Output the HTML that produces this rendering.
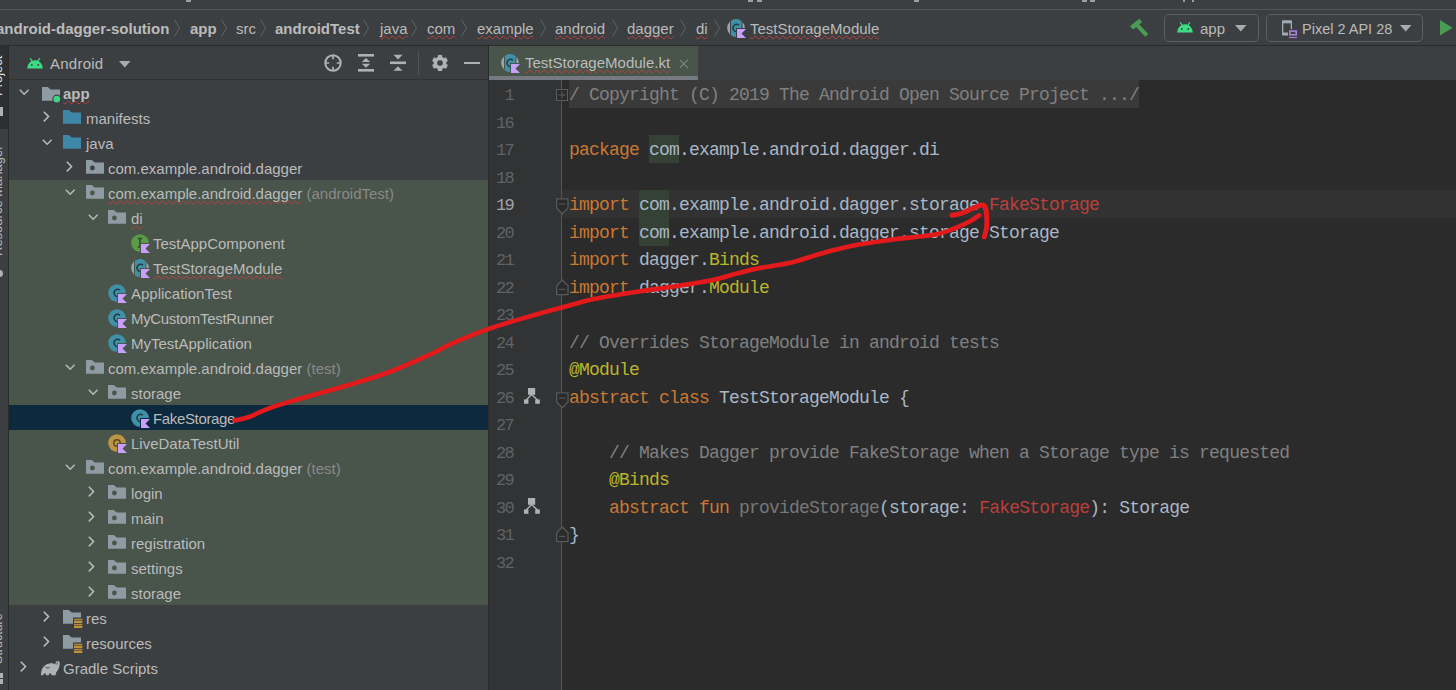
<!DOCTYPE html><html><head><meta charset="utf-8"><style>
*{box-sizing:border-box}
html,body{margin:0;padding:0}
body{width:1456px;height:690px;overflow:hidden;position:relative;background:#3C3F41;font-family:"Liberation Sans", sans-serif;color:#BBBBBB}
.a{position:absolute}
.t{position:absolute;white-space:pre;font-size:15px;line-height:20px}
.b{font-weight:bold}
.sq{text-decoration:underline wavy #BC3F3C;text-decoration-thickness:1px;text-underline-offset:0.5px;text-decoration-skip-ink:none}
.code{position:absolute;white-space:pre;font-family:"Liberation Mono", monospace;font-size:18px;letter-spacing:-0.8px;line-height:27.5px;color:#A9B7C6;left:569px}
.ln{position:absolute;white-space:pre;font-family:"Liberation Mono", monospace;font-size:17px;letter-spacing:-1.7px;line-height:27.5px;color:#606366;width:40px;text-align:right;left:473px}
.kw{color:#CC7832}.an{color:#BBB529}.cm{color:#808080}.er{color:#BC3F3C}.gr{color:#787878}
svg{position:absolute;overflow:visible}
</style></head><body>

<div class="a" style="left:0;top:9px;width:1456px;height:1px;background:#515658"></div>
<div class="a" style="left:0;top:45px;width:1456px;height:1px;background:#2B2B2B"></div>
<div class="t b" style="left:-4px;top:19px">android-dagger-solution</div>
<div class="t b" style="left:190px;top:19px">app</div>
<div class="t" style="left:236px;top:19px">src</div>
<div class="t b" style="left:275px;top:19px">androidTest</div>
<div class="t sq" style="left:380px;top:19px">java</div>
<div class="t sq" style="left:427px;top:19px">com</div>
<div class="t sq" style="left:477px;top:19px">example</div>
<div class="t sq" style="left:555px;top:19px">android</div>
<div class="t sq" style="left:627px;top:19px">dagger</div>
<div class="t sq" style="left:696px;top:19px">di</div>
<div class="t sq" style="left:750px;top:19px">TestStorageModule</div>
<svg style="left:174px;top:19px" width="6" height="18"><path d="M0.5 0.5 L5.5 9 L0.5 17.5" stroke="#5E6264" stroke-width="1" fill="none"/></svg>
<svg style="left:221px;top:19px" width="6" height="18"><path d="M0.5 0.5 L5.5 9 L0.5 17.5" stroke="#5E6264" stroke-width="1" fill="none"/></svg>
<svg style="left:260px;top:19px" width="6" height="18"><path d="M0.5 0.5 L5.5 9 L0.5 17.5" stroke="#5E6264" stroke-width="1" fill="none"/></svg>
<svg style="left:363px;top:19px" width="6" height="18"><path d="M0.5 0.5 L5.5 9 L0.5 17.5" stroke="#5E6264" stroke-width="1" fill="none"/></svg>
<svg style="left:411px;top:19px" width="6" height="18"><path d="M0.5 0.5 L5.5 9 L0.5 17.5" stroke="#5E6264" stroke-width="1" fill="none"/></svg>
<svg style="left:461px;top:19px" width="6" height="18"><path d="M0.5 0.5 L5.5 9 L0.5 17.5" stroke="#5E6264" stroke-width="1" fill="none"/></svg>
<svg style="left:540px;top:19px" width="6" height="18"><path d="M0.5 0.5 L5.5 9 L0.5 17.5" stroke="#5E6264" stroke-width="1" fill="none"/></svg>
<svg style="left:612px;top:19px" width="6" height="18"><path d="M0.5 0.5 L5.5 9 L0.5 17.5" stroke="#5E6264" stroke-width="1" fill="none"/></svg>
<svg style="left:680px;top:19px" width="6" height="18"><path d="M0.5 0.5 L5.5 9 L0.5 17.5" stroke="#5E6264" stroke-width="1" fill="none"/></svg>
<svg style="left:714px;top:19px" width="6" height="18"><path d="M0.5 0.5 L5.5 9 L0.5 17.5" stroke="#5E6264" stroke-width="1" fill="none"/></svg>
<div class="a" style="left:0;top:46px;width:8px;height:644px;background:#3C3F41"></div>
<div class="a" style="left:0;top:46px;width:8px;height:83px;background:#2D2F30"></div>
<div class="a" style="left:8px;top:46px;width:1px;height:644px;background:#2B2B2B"></div>
<div class="a" style="left:186px;top:0;width:5px;height:1.5px;background:#9C9EA0"></div>
<div class="a" style="left:748px;top:0;width:5px;height:1.5px;background:#9C9EA0"></div>
<div class="a" style="left:757px;top:0;width:5px;height:1.5px;background:#9C9EA0"></div>
<div class="a" style="left:914px;top:0;width:5px;height:1.5px;background:#9C9EA0"></div>
<div class="a" style="left:1082px;top:0;width:5px;height:1.5px;background:#9C9EA0"></div>
<div class="a" style="left:1090px;top:0;width:5px;height:1.5px;background:#9C9EA0"></div>
<div class="a" style="left:1183px;top:0;width:2px;height:1.5px;background:#9C9EA0"></div>
<div class="a" style="left:1192px;top:0;width:2px;height:1.5px;background:#9C9EA0"></div>
<div class="a" style="left:9px;top:79px;width:479px;height:1px;background:#323232"></div>
<div class="t" style="left:50px;top:54px;letter-spacing:0.25px">Android</div>
<svg style="left:27px;top:58px" width="16" height="11" viewBox="0 0 16 11"><path d="M3.2 0.3 L5.3 3.6 M12.8 0.3 L10.7 3.6" stroke="#3DDC84" stroke-width="1.2"/><path d="M0.2 10.5 C0.6 5.5 4 2.3 8 2.3 C12 2.3 15.4 5.5 15.8 10.5 Z" fill="#3DDC84"/><circle cx="4.8" cy="7" r="0.9" fill="#3C3F41"/><circle cx="11.2" cy="7" r="0.9" fill="#3C3F41"/></svg>
<svg style="left:119px;top:61px" width="12" height="7"><path d="M0 0 H11.5 L5.75 6.5 Z" fill="#A9ABAD"/></svg>
<svg style="left:323px;top:53px" width="20" height="20"><circle cx="10" cy="10" r="7.7" stroke="#AFB1B3" stroke-width="2" fill="none"/><path d="M10 2 V6.2 M10 13.8 V18 M2 10 H6.2 M13.8 10 H18" stroke="#AFB1B3" stroke-width="1.7"/></svg>
<svg style="left:358px;top:53px" width="16" height="20"><rect x="0" y="1" width="16" height="2.6" fill="#AFB1B3"/><rect x="0" y="16" width="16" height="2.6" fill="#AFB1B3"/><path d="M3.8 9 L8 5 L12.2 9 Z M3.8 10.8 L8 14.8 L12.2 10.8 Z" fill="#AFB1B3"/></svg>
<svg style="left:390px;top:53px" width="16" height="20"><rect x="0" y="8.5" width="16" height="2.6" fill="#AFB1B3"/><path d="M3.5 1.8 H12.5 L8 6.6 Z M3.5 17.8 H12.5 L8 13.2 Z" fill="#AFB1B3"/></svg>
<div class="a" style="left:418px;top:51px;width:1px;height:24px;background:#515456"></div>
<svg style="left:430px;top:53px" width="20" height="20"><rect x="7.8" y="2" width="4.4" height="8" rx="0.6" transform="rotate(0 10 10)" fill="#AFB1B3"/><rect x="7.8" y="2" width="4.4" height="8" rx="0.6" transform="rotate(60 10 10)" fill="#AFB1B3"/><rect x="7.8" y="2" width="4.4" height="8" rx="0.6" transform="rotate(120 10 10)" fill="#AFB1B3"/><rect x="7.8" y="2" width="4.4" height="8" rx="0.6" transform="rotate(180 10 10)" fill="#AFB1B3"/><rect x="7.8" y="2" width="4.4" height="8" rx="0.6" transform="rotate(240 10 10)" fill="#AFB1B3"/><rect x="7.8" y="2" width="4.4" height="8" rx="0.6" transform="rotate(300 10 10)" fill="#AFB1B3"/><circle cx="10" cy="10" r="6.4" fill="#AFB1B3"/><circle cx="10" cy="10" r="2.8" fill="#3C3F41"/></svg>
<div class="a" style="left:464px;top:61.5px;width:16px;height:2.7px;background:#AFB1B3"></div>
<svg style="left:1128px;top:17px" width="24" height="22"><path d="M2 9.3 L11.2 1.8 L14.2 4.9 L5.2 12.4 Z" fill="#499C54"/><path d="M8.6 7.6 L18.8 18.4" stroke="#499C54" stroke-width="4.2"/></svg>
<div class="a" style="left:1163.5px;top:14px;width:95px;height:27.5px;border:1.4px solid #5E6060;border-radius:5px"></div>
<svg style="left:1177px;top:22px" width="16" height="11" viewBox="0 0 16 11"><path d="M3.2 0.3 L5.3 3.6 M12.8 0.3 L10.7 3.6" stroke="#3DDC84" stroke-width="1.2"/><path d="M0.2 10.5 C0.6 5.5 4 2.3 8 2.3 C12 2.3 15.4 5.5 15.8 10.5 Z" fill="#3DDC84"/><circle cx="4.8" cy="7" r="0.9" fill="#3C3F41"/><circle cx="11.2" cy="7" r="0.9" fill="#3C3F41"/></svg>
<div class="t" style="left:1200px;top:19px">app</div>
<svg style="left:1235px;top:25px" width="12" height="7"><path d="M0 0 H11.5 L5.75 6.6 Z" fill="#A9ABAD"/></svg>
<div class="a" style="left:1266px;top:14px;width:157px;height:27.5px;border:1.4px solid #5E6060;border-radius:5px"></div>
<svg style="left:1282px;top:20px" width="17" height="19"><rect x="0" y="0.2" width="10" height="15.4" rx="0.8" fill="#9FABB2"/><rect x="1.3" y="3.3" width="7.4" height="9.2" fill="#3C3F41"/><rect x="6" y="9.2" width="11" height="9.8" fill="#3C3F41"/><rect x="7" y="10.2" width="8.1" height="5.4" fill="#A27DD6"/><rect x="8.7" y="11.9" width="4.7" height="2" fill="#3C3F41"/><rect x="7" y="16.9" width="8.1" height="1.2" fill="#A27DD6"/></svg>
<div class="t" style="left:1302px;top:19px;font-size:14.5px">Pixel 2 API 28</div>
<svg style="left:1400px;top:25px" width="12" height="7"><path d="M0 0 H11.5 L5.75 6.6 Z" fill="#A9ABAD"/></svg>
<svg style="left:1440px;top:20px" width="16" height="16"><path d="M0 0 L12.5 7.8 L0 15.6 Z" fill="#499C54"/></svg>
<div class="a" style="left:9px;top:180px;width:479px;height:425px;background:#49544A"></div>
<div class="a" style="left:9px;top:405px;width:479px;height:25px;background:#0D293E"></div>
<svg style="left:18.5px;top:88.5px" width="12" height="8"><path d="M0.8 0.8 L5.2 5.2 L9.6 0.8" stroke="#B8BABC" stroke-width="1.5" fill="none"/></svg>
<svg style="left:41.8px;top:86.5px" width="20" height="18"><path d="M0 0 H5.8 L8.7 2.5 H18 V13.7 H0 Z" fill="#8E9BA3"/><circle cx="14.8" cy="12.1" r="4.5" fill="#3C3F41"/><circle cx="14.8" cy="12.1" r="3.4" fill="#3DD384"/></svg>
<div class="t" style="left:63px;top:84px;letter-spacing:0"><span class="b sq">app</span><span style="color:#8A8A8A"></span></div>
<svg style="left:43px;top:111.2px" width="8" height="12"><path d="M0.8 0.8 L5.6 5.6 L0.8 10.4" stroke="#B8BABC" stroke-width="1.5" fill="none"/></svg>
<svg style="left:63px;top:110.4px" width="19" height="15"><path d="M0 0 H5.8 L8.7 2.5 H18 V13.7 H0 Z" fill="#3F87A6"/></svg>
<div class="t" style="left:86px;top:109px;letter-spacing:0"><span class="">manifests</span><span style="color:#8A8A8A"></span></div>
<svg style="left:41.5px;top:138.5px" width="12" height="8"><path d="M0.8 0.8 L5.2 5.2 L9.6 0.8" stroke="#B8BABC" stroke-width="1.5" fill="none"/></svg>
<svg style="left:63px;top:135.4px" width="19" height="15"><path d="M0 0 H5.8 L8.7 2.5 H18 V13.7 H0 Z" fill="#3F87A6"/></svg>
<div class="t" style="left:86px;top:134px;letter-spacing:0"><span class="">java</span><span style="color:#8A8A8A"></span></div>
<svg style="left:66px;top:161.2px" width="8" height="12"><path d="M0.8 0.8 L5.6 5.6 L0.8 10.4" stroke="#B8BABC" stroke-width="1.5" fill="none"/></svg>
<svg style="left:86px;top:160.4px" width="19" height="15"><path d="M0 0 H5.8 L8.7 2.5 H18 V13.7 H0 Z" fill="#8E9BA3"/><circle cx="6.4" cy="8" r="2.4" fill="#3C3F41"/></svg>
<div class="t" style="left:108px;top:159px;letter-spacing:0"><span class="">com.example.android.dagger</span><span style="color:#8A8A8A"></span></div>
<svg style="left:64.5px;top:188.5px" width="12" height="8"><path d="M0.8 0.8 L5.2 5.2 L9.6 0.8" stroke="#B8BABC" stroke-width="1.5" fill="none"/></svg>
<svg style="left:86px;top:185.4px" width="19" height="15"><path d="M0 0 H5.8 L8.7 2.5 H18 V13.7 H0 Z" fill="#8E9BA3"/><circle cx="6.4" cy="8" r="2.4" fill="#49544A"/></svg>
<div class="t" style="left:108px;top:184px;letter-spacing:0"><span class="sq">com.example.android.dagger</span><span style="color:#8A8A8A"> (androidTest)</span></div>
<svg style="left:87.5px;top:213.5px" width="12" height="8"><path d="M0.8 0.8 L5.2 5.2 L9.6 0.8" stroke="#B8BABC" stroke-width="1.5" fill="none"/></svg>
<svg style="left:108px;top:210.4px" width="19" height="15"><path d="M0 0 H5.8 L8.7 2.5 H18 V13.7 H0 Z" fill="#8E9BA3"/><circle cx="6.4" cy="8" r="2.4" fill="#49544A"/></svg>
<div class="t" style="left:131px;top:209px;letter-spacing:0"><span class="sq">di</span><span style="color:#8A8A8A"></span></div>
<svg style="left:131px;top:234px" width="20" height="20"><circle cx="9" cy="9" r="8.8" fill="#5B9A47"/><path d="M6.8 4.6 H11.2 M9 4.6 V13 M6.8 13 H11.2" stroke="#2E4A28" stroke-width="1.5" fill="none"/><rect x="9" y="9" width="11" height="11" fill="#49544A"/><path d="M10 10 H19 L14.5 14.5 L19 19 H10 Z" fill="#C7A0FB"/></svg>
<div class="t" style="left:153px;top:234px;letter-spacing:0"><span class="">TestAppComponent</span><span style="color:#8A8A8A"></span></div>
<svg style="left:131px;top:259px" width="20" height="20"><circle cx="9" cy="9" r="8.8" fill="#9AA5AC"/><path d="M3 2.56 A8.8 8.8 0 0 1 15.5 3.07 V14.93 A8.8 8.8 0 0 1 3 15.44 Z" fill="#49544A"/><path d="M4 1.76 A8.8 8.8 0 0 1 14.5 2.13 V15.87 A8.8 8.8 0 0 1 4 16.24 Z" fill="#4090A8"/><path d="M12 6.2 A3.6 3.6 0 1 0 11.5 12" stroke="#223A44" stroke-width="1.4" fill="none"/><rect x="9" y="9" width="11" height="11" fill="#49544A"/><path d="M10 10 H19 L14.5 14.5 L19 19 H10 Z" fill="#C7A0FB"/></svg>
<div class="t" style="left:153px;top:259px;letter-spacing:0"><span class="sq">TestStorageModule</span><span style="color:#8A8A8A"></span></div>
<svg style="left:108px;top:284px" width="20" height="20"><circle cx="9" cy="9" r="8.8" fill="#4090A8"/><path d="M12 6.2 A3.6 3.6 0 1 0 11.5 12" stroke="#223A44" stroke-width="1.4" fill="none"/><rect x="9" y="9" width="11" height="11" fill="#49544A"/><path d="M10 10 H19 L14.5 14.5 L19 19 H10 Z" fill="#C7A0FB"/></svg>
<div class="t" style="left:131px;top:284px;letter-spacing:0"><span class="">ApplicationTest</span><span style="color:#8A8A8A"></span></div>
<svg style="left:108px;top:309px" width="20" height="20"><circle cx="9" cy="9" r="8.8" fill="#4090A8"/><path d="M12 6.2 A3.6 3.6 0 1 0 11.5 12" stroke="#223A44" stroke-width="1.4" fill="none"/><rect x="9" y="9" width="11" height="11" fill="#49544A"/><path d="M10 10 H19 L14.5 14.5 L19 19 H10 Z" fill="#C7A0FB"/></svg>
<div class="t" style="left:131px;top:309px;letter-spacing:-0.33px"><span class="">MyCustomTestRunner</span><span style="color:#8A8A8A"></span></div>
<svg style="left:108px;top:334px" width="20" height="20"><circle cx="9" cy="9" r="8.8" fill="#4090A8"/><path d="M12 6.2 A3.6 3.6 0 1 0 11.5 12" stroke="#223A44" stroke-width="1.4" fill="none"/><rect x="9" y="9" width="11" height="11" fill="#49544A"/><path d="M10 10 H19 L14.5 14.5 L19 19 H10 Z" fill="#C7A0FB"/></svg>
<div class="t" style="left:131px;top:334px;letter-spacing:0"><span class="">MyTestApplication</span><span style="color:#8A8A8A"></span></div>
<svg style="left:64.5px;top:363.5px" width="12" height="8"><path d="M0.8 0.8 L5.2 5.2 L9.6 0.8" stroke="#B8BABC" stroke-width="1.5" fill="none"/></svg>
<svg style="left:86px;top:360.4px" width="19" height="15"><path d="M0 0 H5.8 L8.7 2.5 H18 V13.7 H0 Z" fill="#8E9BA3"/><circle cx="6.4" cy="8" r="2.4" fill="#49544A"/></svg>
<div class="t" style="left:108px;top:359px;letter-spacing:0"><span class="">com.example.android.dagger</span><span style="color:#8A8A8A"> (test)</span></div>
<svg style="left:87.5px;top:388.5px" width="12" height="8"><path d="M0.8 0.8 L5.2 5.2 L9.6 0.8" stroke="#B8BABC" stroke-width="1.5" fill="none"/></svg>
<svg style="left:108px;top:385.4px" width="19" height="15"><path d="M0 0 H5.8 L8.7 2.5 H18 V13.7 H0 Z" fill="#8E9BA3"/><circle cx="6.4" cy="8" r="2.4" fill="#49544A"/></svg>
<div class="t" style="left:131px;top:384px;letter-spacing:0"><span class="">storage</span><span style="color:#8A8A8A"></span></div>
<svg style="left:131px;top:409px" width="20" height="20"><circle cx="9" cy="9" r="8.8" fill="#4090A8"/><path d="M12 6.2 A3.6 3.6 0 1 0 11.5 12" stroke="#223A44" stroke-width="1.4" fill="none"/><rect x="9" y="9" width="11" height="11" fill="#0D293E"/><path d="M10 10 H19 L14.5 14.5 L19 19 H10 Z" fill="#C7A0FB"/></svg>
<div class="t" style="left:153px;top:409px;letter-spacing:-0.35px"><span class="">FakeStorage</span><span style="color:#8A8A8A"></span></div>
<svg style="left:108px;top:434px" width="20" height="20"><circle cx="9" cy="9" r="8.8" fill="#BB9545"/><circle cx="9" cy="9" r="3.2" stroke="#5A4420" stroke-width="1.4" fill="none"/><rect x="9" y="9" width="11" height="11" fill="#49544A"/><path d="M10 10 H19 L14.5 14.5 L19 19 H10 Z" fill="#C7A0FB"/></svg>
<div class="t" style="left:131px;top:434px;letter-spacing:0"><span class="">LiveDataTestUtil</span><span style="color:#8A8A8A"></span></div>
<svg style="left:64.5px;top:463.5px" width="12" height="8"><path d="M0.8 0.8 L5.2 5.2 L9.6 0.8" stroke="#B8BABC" stroke-width="1.5" fill="none"/></svg>
<svg style="left:86px;top:460.4px" width="19" height="15"><path d="M0 0 H5.8 L8.7 2.5 H18 V13.7 H0 Z" fill="#8E9BA3"/><circle cx="6.4" cy="8" r="2.4" fill="#49544A"/></svg>
<div class="t" style="left:108px;top:459px;letter-spacing:0"><span class="">com.example.android.dagger</span><span style="color:#8A8A8A"> (test)</span></div>
<svg style="left:88px;top:486.2px" width="8" height="12"><path d="M0.8 0.8 L5.6 5.6 L0.8 10.4" stroke="#B8BABC" stroke-width="1.5" fill="none"/></svg>
<svg style="left:108px;top:485.4px" width="19" height="15"><path d="M0 0 H5.8 L8.7 2.5 H18 V13.7 H0 Z" fill="#8E9BA3"/><circle cx="6.4" cy="8" r="2.4" fill="#49544A"/></svg>
<div class="t" style="left:131px;top:484px;letter-spacing:0"><span class="">login</span><span style="color:#8A8A8A"></span></div>
<svg style="left:88px;top:511.2px" width="8" height="12"><path d="M0.8 0.8 L5.6 5.6 L0.8 10.4" stroke="#B8BABC" stroke-width="1.5" fill="none"/></svg>
<svg style="left:108px;top:510.4px" width="19" height="15"><path d="M0 0 H5.8 L8.7 2.5 H18 V13.7 H0 Z" fill="#8E9BA3"/><circle cx="6.4" cy="8" r="2.4" fill="#49544A"/></svg>
<div class="t" style="left:131px;top:509px;letter-spacing:0"><span class="">main</span><span style="color:#8A8A8A"></span></div>
<svg style="left:88px;top:536.2px" width="8" height="12"><path d="M0.8 0.8 L5.6 5.6 L0.8 10.4" stroke="#B8BABC" stroke-width="1.5" fill="none"/></svg>
<svg style="left:108px;top:535.4px" width="19" height="15"><path d="M0 0 H5.8 L8.7 2.5 H18 V13.7 H0 Z" fill="#8E9BA3"/><circle cx="6.4" cy="8" r="2.4" fill="#49544A"/></svg>
<div class="t" style="left:131px;top:534px;letter-spacing:0"><span class="">registration</span><span style="color:#8A8A8A"></span></div>
<svg style="left:88px;top:561.2px" width="8" height="12"><path d="M0.8 0.8 L5.6 5.6 L0.8 10.4" stroke="#B8BABC" stroke-width="1.5" fill="none"/></svg>
<svg style="left:108px;top:560.4px" width="19" height="15"><path d="M0 0 H5.8 L8.7 2.5 H18 V13.7 H0 Z" fill="#8E9BA3"/><circle cx="6.4" cy="8" r="2.4" fill="#49544A"/></svg>
<div class="t" style="left:131px;top:559px;letter-spacing:0"><span class="">settings</span><span style="color:#8A8A8A"></span></div>
<svg style="left:88px;top:586.2px" width="8" height="12"><path d="M0.8 0.8 L5.6 5.6 L0.8 10.4" stroke="#B8BABC" stroke-width="1.5" fill="none"/></svg>
<svg style="left:108px;top:585.4px" width="19" height="15"><path d="M0 0 H5.8 L8.7 2.5 H18 V13.7 H0 Z" fill="#8E9BA3"/><circle cx="6.4" cy="8" r="2.4" fill="#49544A"/></svg>
<div class="t" style="left:131px;top:584px;letter-spacing:0"><span class="">storage</span><span style="color:#8A8A8A"></span></div>
<svg style="left:43px;top:611.2px" width="8" height="12"><path d="M0.8 0.8 L5.6 5.6 L0.8 10.4" stroke="#B8BABC" stroke-width="1.5" fill="none"/></svg>
<svg style="left:63px;top:610.4px" width="20" height="19"><path d="M0 0 H5.8 L8.7 2.5 H18 V13.7 H0 Z" fill="#8E9BA3"/><rect x="10" y="7.5" width="10" height="11" fill="#3C3F41"/><rect x="11" y="8.8" width="8.3" height="1.6" fill="#B88A38"/><rect x="11" y="11.2" width="8.3" height="1.6" fill="#E3A838"/><rect x="11" y="13.8" width="8.3" height="1.6" fill="#B88A38"/><rect x="11" y="16.2" width="8.3" height="1.6" fill="#E3A838"/></svg>
<div class="t" style="left:86px;top:609px;letter-spacing:0"><span class="">res</span><span style="color:#8A8A8A"></span></div>
<svg style="left:43px;top:636.2px" width="8" height="12"><path d="M0.8 0.8 L5.6 5.6 L0.8 10.4" stroke="#B8BABC" stroke-width="1.5" fill="none"/></svg>
<svg style="left:63px;top:635.4px" width="20" height="19"><path d="M0 0 H5.8 L8.7 2.5 H18 V13.7 H0 Z" fill="#8E9BA3"/><rect x="10" y="7.5" width="10" height="11" fill="#3C3F41"/><rect x="11" y="8.8" width="8.3" height="1.6" fill="#B88A38"/><rect x="11" y="11.2" width="8.3" height="1.6" fill="#E3A838"/><rect x="11" y="13.8" width="8.3" height="1.6" fill="#B88A38"/><rect x="11" y="16.2" width="8.3" height="1.6" fill="#E3A838"/></svg>
<div class="t" style="left:86px;top:634px;letter-spacing:0"><span class="">resources</span><span style="color:#8A8A8A"></span></div>
<svg style="left:20px;top:661.2px" width="8" height="12"><path d="M0.8 0.8 L5.6 5.6 L0.8 10.4" stroke="#B8BABC" stroke-width="1.5" fill="none"/></svg>
<svg style="left:40px;top:660px" width="21" height="17"><path d="M1 15.2 C0.8 9.5 3.5 4.2 9.5 3.4 C12 3.1 13.8 3.6 15.2 4.6 C15.4 2.6 16.4 1.1 17.8 1.1 C19.6 1.1 20 3.2 19.6 5.2 C19 8.5 17.6 10.8 16.3 12.3 L15.5 15.2 L11.6 15.2 L11.1 13.4 L9.2 13.4 L8.7 15.2 L6.1 15.2 L5.6 13.4 L3.7 13.4 L3.2 15.2 Z" fill="#AEB3B6"/><path d="M16.8 4.6 C16.6 3.4 17.2 2.6 17.9 2.7" stroke="#3C3F41" stroke-width="0.9" fill="none"/><path d="M5 6.5 C6 8.2 8 8.4 9.8 7.4" stroke="#3C3F41" stroke-width="0.9" fill="none"/></svg>
<div class="t" style="left:63px;top:659px;letter-spacing:0"><span class="">Gradle Scripts</span><span style="color:#8A8A8A"></span></div>
<div class="a" style="left:488px;top:46px;width:1px;height:644px;background:#2B2B2B"></div>
<div class="a" style="left:489px;top:80px;width:967px;height:610px;background:#2B2B2B"></div>
<div class="a" style="left:489px;top:80px;width:72px;height:610px;background:#313335"></div>
<div class="a" style="left:561px;top:80px;width:1px;height:610px;background:#555555"></div>
<div class="a" style="left:489px;top:46px;width:209px;height:30px;background:#49544A"></div>
<div class="a" style="left:489px;top:76px;width:209px;height:4px;background:#747A80"></div>
<div class="t sq" style="left:525px;top:53px">TestStorageModule.kt</div>
<div class="a" style="left:489px;top:190px;width:72px;height:28px;background:#313335"></div>
<div class="a" style="left:562px;top:190px;width:894px;height:28px;background:#323232"></div>
<div class="a" style="left:569px;top:80px;width:570px;height:28px;background:#3A3A3A"></div>
<div class="a" style="left:649px;top:135.00px;width:30px;height:28px;background:#344134"></div>
<div class="a" style="left:639px;top:190.00px;width:30px;height:28px;background:#344134"></div>
<div class="a" style="left:639px;top:217.50px;width:30px;height:28px;background:#344134"></div>
<div class="ln" style="top:82.00px">1</div>
<div class="code" style="top:82.00px"><span class="cm">/ Copyright (C) 2019 The Android Open Source Project .../</span></div>
<div class="ln" style="top:109.50px">16</div>
<div class="code" style="top:109.50px"></div>
<div class="ln" style="top:137.00px">17</div>
<div class="code" style="top:137.00px"><span class="kw">package</span> com.example.android.dagger.di</div>
<div class="ln" style="top:164.50px">18</div>
<div class="code" style="top:164.50px"></div>
<div class="ln" style="top:192.00px;color:#A4A3A3">19</div>
<div class="code" style="top:192.00px"><span class="kw">import</span> com.example.android.dagger.storage.<span class="er">FakeStorage</span></div>
<div class="ln" style="top:219.50px">20</div>
<div class="code" style="top:219.50px"><span class="kw">import</span> com.example.android.dagger.storage.Storage</div>
<div class="ln" style="top:247.00px">21</div>
<div class="code" style="top:247.00px"><span class="kw">import</span> dagger.<span class="an">Binds</span></div>
<div class="ln" style="top:274.50px">22</div>
<div class="code" style="top:274.50px"><span class="kw">import</span> dagger.<span class="an">Module</span></div>
<div class="ln" style="top:302.00px">23</div>
<div class="code" style="top:302.00px"></div>
<div class="ln" style="top:329.50px">24</div>
<div class="code" style="top:329.50px"><span class="cm">// Overrides StorageModule in android tests</span></div>
<div class="ln" style="top:357.00px">25</div>
<div class="code" style="top:357.00px"><span class="an">@Module</span></div>
<div class="ln" style="top:384.50px">26</div>
<div class="code" style="top:384.50px"><span class="kw">abstract class</span> TestStorageModule {</div>
<div class="ln" style="top:412.00px">27</div>
<div class="code" style="top:412.00px"></div>
<div class="ln" style="top:439.50px">28</div>
<div class="code" style="top:439.50px">    <span class="cm">// Makes Dagger provide FakeStorage when a Storage type is requested</span></div>
<div class="ln" style="top:467.00px">29</div>
<div class="code" style="top:467.00px">    <span class="an">@Binds</span></div>
<div class="ln" style="top:494.50px">30</div>
<div class="code" style="top:494.50px">    <span class="kw">abstract fun</span> <span class="gr">provideStorage</span>(storage: <span class="er">FakeStorage</span>): Storage</div>
<div class="ln" style="top:522.00px">31</div>
<div class="code" style="top:522.00px">}</div>
<div class="ln" style="top:549.50px">32</div>
<div class="code" style="top:549.50px"></div>
<svg style="left:727px;top:19px" width="20" height="20"><circle cx="9" cy="9" r="8.8" fill="#9AA5AC"/><path d="M3 2.56 A8.8 8.8 0 0 1 15.5 3.07 V14.93 A8.8 8.8 0 0 1 3 15.44 Z" fill="#3C3F41"/><path d="M4 1.76 A8.8 8.8 0 0 1 14.5 2.13 V15.87 A8.8 8.8 0 0 1 4 16.24 Z" fill="#4090A8"/><path d="M12 6.2 A3.6 3.6 0 1 0 11.5 12" stroke="#223A44" stroke-width="1.4" fill="none"/><rect x="9" y="9" width="11" height="11" fill="#3C3F41"/><path d="M10 10 H19 L14.5 14.5 L19 19 H10 Z" fill="#C7A0FB"/></svg>
<svg style="left:501px;top:54px" width="20" height="20"><circle cx="9" cy="9" r="8.8" fill="#9AA5AC"/><path d="M3 2.56 A8.8 8.8 0 0 1 15.5 3.07 V14.93 A8.8 8.8 0 0 1 3 15.44 Z" fill="#49544A"/><path d="M4 1.76 A8.8 8.8 0 0 1 14.5 2.13 V15.87 A8.8 8.8 0 0 1 4 16.24 Z" fill="#4090A8"/><path d="M12 6.2 A3.6 3.6 0 1 0 11.5 12" stroke="#223A44" stroke-width="1.4" fill="none"/><rect x="9" y="9" width="11" height="11" fill="#49544A"/><path d="M10 10 H19 L14.5 14.5 L19 19 H10 Z" fill="#C7A0FB"/></svg>
<svg style="left:678.5px;top:58.5px" width="10" height="10"><path d="M0.8 0.8 L8.8 8.8 M8.8 0.8 L0.8 8.8" stroke="#7F8382" stroke-width="1.2"/></svg>
<svg style="left:556px;top:88.5px" width="12" height="12"><rect x="0.5" y="0.5" width="11" height="11" fill="#2B2B2B" stroke="#5A5D5F" stroke-width="1"/><path d="M2.5 6 H9.5 M6 2.5 V9.5" stroke="#5A5D5F" stroke-width="1"/></svg>
<svg style="left:555.5px;top:198px" width="13" height="17"><path d="M0.65 0.8 H12 V10 L6.3 15.8 L0.65 10 Z" fill="#2B2B2B" stroke="#555759" stroke-width="1.3"/><path d="M3 6.1 H9.5" stroke="#555759" stroke-width="1.1"/></svg>
<svg style="left:555.5px;top:279px" width="13" height="17"><path d="M0.65 15.6 H12 V6.7 L6.3 1 L0.65 6.7 Z" fill="#2B2B2B" stroke="#555759" stroke-width="1.3"/><path d="M3 10.4 H9.5" stroke="#555759" stroke-width="1.1"/></svg>
<svg style="left:555.5px;top:392px" width="13" height="17"><path d="M0.65 0.8 H12 V10 L6.3 15.8 L0.65 10 Z" fill="#2B2B2B" stroke="#555759" stroke-width="1.3"/><path d="M3 6.1 H9.5" stroke="#555759" stroke-width="1.1"/></svg>
<svg style="left:555.5px;top:526px" width="13" height="17"><path d="M0.65 15.6 H12 V6.7 L6.3 1 L0.65 6.7 Z" fill="#2B2B2B" stroke="#555759" stroke-width="1.3"/><path d="M3 10.4 H9.5" stroke="#555759" stroke-width="1.1"/></svg>
<svg style="left:523px;top:388px" width="18" height="17"><rect x="5" y="0" width="7.2" height="6.8" fill="#AFB1B3"/><rect x="1" y="11.4" width="4.4" height="4.4" fill="#AFB1B3"/><rect x="12.2" y="11.4" width="4.6" height="4.4" fill="#AFB1B3"/><path d="M8.6 6.5 L3.2 12 M8.6 6.5 L14.4 12" stroke="#AFB1B3" stroke-width="1.4"/></svg>
<svg style="left:523px;top:498px" width="18" height="17"><rect x="5" y="0" width="7.2" height="6.8" fill="#AFB1B3"/><rect x="1" y="11.4" width="4.4" height="4.4" fill="#AFB1B3"/><rect x="12.2" y="11.4" width="4.6" height="4.4" fill="#AFB1B3"/><path d="M8.6 6.5 L3.2 12 M8.6 6.5 L14.4 12" stroke="#AFB1B3" stroke-width="1.4"/></svg>
<div class="a" style="left:0;top:46px;width:9px;height:644px;overflow:hidden"><div class="t" style="font-size:13px;left:-11.8px;top:50px;transform-origin:0 0;transform:rotate(-90deg);color:#DFE1E5">Project</div><div class="a" style="left:0;top:60.5px;width:3px;height:9px;background:#AFB1B3"></div><div class="t" style="font-size:13px;left:-11.8px;top:210px;transform-origin:0 0;transform:rotate(-90deg);color:#BBBBBB">Resource Manager</div><div class="a" style="left:-4px;top:224px;width:7px;height:7px;border-radius:50%;background:#AFB1B3"></div><div class="t" style="font-size:12.5px;left:-11.8px;top:618px;transform-origin:0 0;transform:rotate(-90deg);color:#BBBBBB">Structure</div><div class="a" style="left:0;top:626.5px;width:2.5px;height:5.5px;background:#AFB1B3"></div><div class="a" style="left:0;top:633px;width:2.5px;height:5px;background:#AFB1B3"></div></div>
<svg style="left:0;top:0" width="1456" height="690"><g fill="none" stroke="#E3191C" stroke-linecap="round" stroke-linejoin="round"><path d="M234.5 420.5 C236.9 419.9 243.1 419.0 248.8 417.0 C254.6 415.0 260.1 411.5 269.0 408.3 C277.9 405.1 289.7 401.8 302.5 398.0 C315.3 394.2 331.5 390.1 346.0 385.8 C360.5 381.5 375.4 377.2 389.4 372.0 C403.4 366.8 419.6 359.2 430.0 354.5 C440.4 349.8 442.1 347.8 451.9 343.5 C461.7 339.2 475.3 333.4 488.6 328.8 C501.9 324.2 519.1 319.4 531.6 315.8 C544.1 312.2 552.9 309.8 563.5 307.0 C574.1 304.2 582.6 301.4 595.4 298.8 C608.1 296.2 626.7 293.4 640.0 291.3 C653.3 289.2 663.1 288.2 675.3 286.3 C687.5 284.4 702.9 282.1 713.0 280.0 C723.1 277.9 728.1 275.8 735.7 273.8 C743.3 271.9 750.9 269.8 758.4 268.3 C765.9 266.8 774.7 265.8 781.0 264.6 C787.3 263.4 789.9 263.0 796.2 261.3 C802.5 259.6 809.8 256.7 818.8 254.2 C827.8 251.7 838.2 248.6 850.0 246.2 C861.8 243.8 878.3 241.6 889.5 240.0 C900.7 238.4 909.1 237.8 917.0 236.8 C924.9 235.9 931.2 235.4 936.7 234.3 C942.2 233.2 945.9 231.6 949.9 230.2 C953.9 228.8 957.2 227.3 960.9 225.6 C964.6 223.9 968.9 221.9 971.9 220.2 C974.9 218.5 977.8 216.1 979.0 215.3" stroke-width="4.6"/><path d="M952.1 215.3 C953.6 215.0 957.6 214.6 960.9 213.5 C964.2 212.4 968.5 210.1 971.9 208.7 C975.3 207.3 979.3 205.3 981.5 205.0 C983.7 204.7 984.4 205.0 985.3 207.0 C986.2 209.0 986.5 213.5 986.7 217.0 C986.9 220.5 986.9 224.7 986.5 228.0 C986.1 231.3 984.7 235.3 984.3 236.8" stroke-width="5"/></g></svg>
</body></html>
